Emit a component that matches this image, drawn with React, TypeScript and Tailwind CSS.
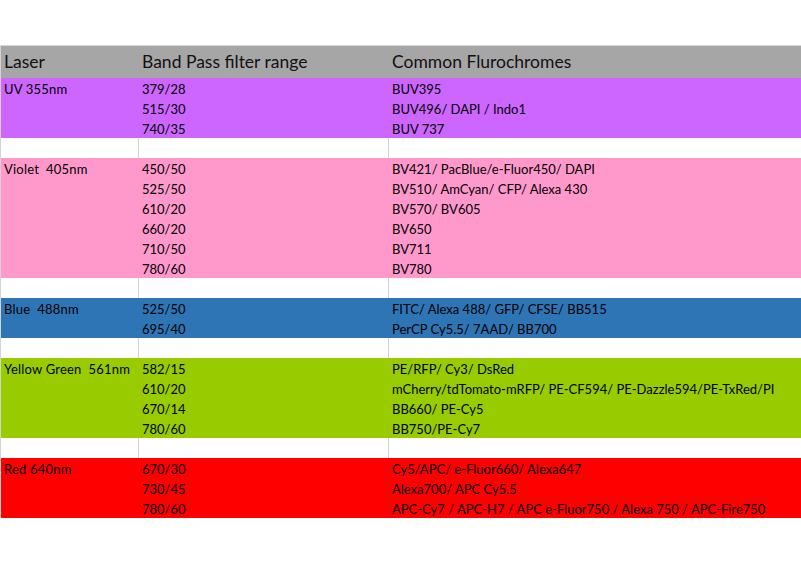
type Group = {
  laser: string;
  bg: string;
  rows: [string, string][];
};

const groups: Group[] = [
  {
    laser: 'UV 355nm',
    bg: 'bg-[#cc66ff]',
    rows: [
      ['379/28', 'BUV395'],
      ['515/30', 'BUV496/ DAPI / Indo1'],
      ['740/35', 'BUV 737'],
    ],
  },
  {
    laser: 'Violet  405nm',
    bg: 'bg-[#ff99cc]',
    rows: [
      ['450/50', 'BV421/ PacBlue/e-Fluor450/ DAPI'],
      ['525/50', 'BV510/ AmCyan/ CFP/ Alexa 430'],
      ['610/20', 'BV570/ BV605'],
      ['660/20', 'BV650'],
      ['710/50', 'BV711'],
      ['780/60', 'BV780'],
    ],
  },
  {
    laser: 'Blue  488nm',
    bg: 'bg-[#2e75b6]',
    rows: [
      ['525/50', 'FITC/ Alexa 488/ GFP/ CFSE/ BB515'],
      ['695/40', 'PerCP Cy5.5/ 7AAD/ BB700'],
    ],
  },
  {
    laser: 'Yellow Green  561nm',
    bg: 'bg-[#99cc00]',
    rows: [
      ['582/15', 'PE/RFP/ Cy3/ DsRed'],
      ['610/20', 'mCherry/tdTomato-mRFP/ PE-CF594/ PE-Dazzle594/PE-TxRed/PI'],
      ['670/14', 'BB660/ PE-Cy5'],
      ['780/60', 'BB750/PE-Cy7'],
    ],
  },
  {
    laser: 'Red 640nm',
    bg: 'bg-[#ff0000]',
    rows: [
      ['670/30', 'Cy5/APC/ e-Fluor660/ Alexa647'],
      ['730/45', 'Alexa700/ APC Cy5.5'],
      ['780/60', 'APC-Cy7 / APC-H7 / APC e-Fluor750 / Alexa 750 / APC-Fire750'],
    ],
  },
];

function BlankRow() {
  return (
    <div className="grid grid-cols-[138px_250px_1fr] h-5 bg-white">
      <div className="border-r border-[#d4d4d4]" />
      <div className="border-r border-[#d4d4d4]" />
      <div />
    </div>
  );
}

export default function App() {
  return (
    <div className="w-[801px] h-[564px] bg-white text-black font-['Lato','Liberation_Sans',sans-serif] overflow-hidden">
      <div className="h-[45px]" />
      <div className="border-t border-l border-[#d4d4d4]">
        <div className="grid grid-cols-[138px_250px_1fr] h-8 bg-[#a6a6a6] text-[17.5px] items-end pb-[6px] leading-5 text-[#111]">
          <div className="pl-[3px]">Laser</div>
          <div className="pl-[3px]">Band Pass filter range</div>
          <div className="pl-[3px]">Common Flurochromes</div>
        </div>
        {groups.map((g, gi) => (
          <div key={g.laser}>
            <div className={`${g.bg} text-[13px] leading-5`}>
              {g.rows.map((r, i) => (
                <div key={i} className="grid grid-cols-[138px_250px_1fr] h-5 pt-px">
                  <div className="pl-[3px] whitespace-pre tracking-[0.2px]">{i === 0 ? g.laser : ''}</div>
                  <div className="pl-[3px]">{r[0]}</div>
                  <div className="pl-[3px] whitespace-nowrap">{r[1]}</div>
                </div>
              ))}
            </div>
            {gi < groups.length - 1 && <BlankRow />}
          </div>
        ))}
      </div>
    </div>
  );
}
